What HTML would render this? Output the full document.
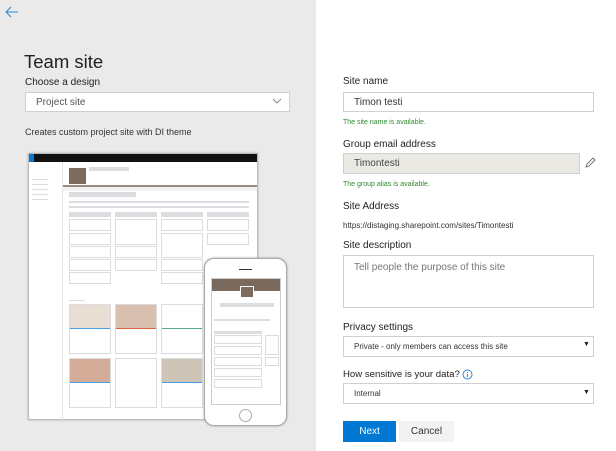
<!DOCTYPE html>
<html><head><meta charset="utf-8"><style>
*{box-sizing:border-box;margin:0;padding:0}
body{width:616px;height:451px;position:relative;overflow:hidden;background:#fff;font-family:"Liberation Sans",sans-serif;color:#222}
.a{position:absolute}
.left{left:0;top:0;width:316px;height:451px;background:#eaeaea}
.lbl{font-size:10px;color:#222}
.inp{border:1px solid #d0d0d0;background:#fff;font-size:10px;color:#555;padding-left:10px;display:flex;align-items:center}
.g{font-size:7px;color:#2e8b2e}
.bar{background:#dcdde0}
.box{border:1px solid #dcdcdc;background:#fff}
</style></head><body>
<div class="a left"></div>
<svg class="a" style="left:4px;top:5px" width="16" height="14"><path d="M14 7H2M7 2L2 7l5 5" stroke="#2b88d8" stroke-width="1" fill="none"/></svg>
<div class="a" style="left:24px;top:51px;font-size:18.5px;color:#222">Team site</div>
<div class="a lbl" style="left:25px;top:77px">Choose a design</div>
<div class="a inp" style="left:25px;top:92px;width:265px;height:20px">Project site</div>
<svg class="a" style="left:272px;top:98px" width="10" height="6"><path d="M1 1l4 4 4-4" stroke="#888" fill="none"/></svg>
<div class="a" style="left:25px;top:127px;font-size:9px;color:#333">Creates custom project site with DI theme</div>

<!-- desktop mock -->
<div class="a" style="left:28px;top:153px;width:230px;height:267px;background:#fff;border:1px solid #bbb;box-shadow:0 0 2px #aaa">
 <div class="a" style="left:0;top:0;width:228px;height:8px;background:#111"></div>
 <div class="a" style="left:0;top:0;width:5px;height:8px;background:#0078d4"></div>
 <div class="a" style="left:33px;top:8px;width:1px;height:258px;background:#e4e4e4"></div>
 <div class="a" style="left:34px;top:31px;width:194px;height:2px;background:#9b8a7d"></div>
 <div class="a" style="left:34px;top:33px;width:194px;height:4px;background:#f2f2f2"></div>
 <div class="a" style="left:40px;top:14px;width:17px;height:16px;background:#7d6b5e"></div>
 <div class="a bar" style="left:60px;top:13px;width:40px;height:4px"></div>
 <div class="a bar" style="left:3px;top:25px;width:16px;height:1px"></div>
 <div class="a bar" style="left:3px;top:30px;width:16px;height:1px"></div>
 <div class="a bar" style="left:3px;top:35px;width:16px;height:1px"></div>
 <div class="a bar" style="left:3px;top:40px;width:16px;height:1px"></div>
 <div class="a bar" style="left:3px;top:45px;width:16px;height:1px"></div>
 <div class="a bar" style="left:40px;top:38px;width:67px;height:5px"></div>
 <div class="a bar" style="left:40px;top:47px;width:180px;height:2px"></div>
 <div class="a bar" style="left:40px;top:52px;width:180px;height:2px"></div>
 <div class="a bar" style="left:40px;top:58px;width:42px;height:5px"></div>
 <div class="a bar" style="left:86px;top:58px;width:42px;height:5px"></div>
 <div class="a bar" style="left:132px;top:58px;width:42px;height:5px"></div>
 <div class="a bar" style="left:178px;top:58px;width:42px;height:5px"></div>
 <div class="a box" style="left:40px;top:65px;width:42px;height:12px"></div>
 <div class="a box" style="left:40px;top:79px;width:42px;height:12px"></div>
 <div class="a box" style="left:40px;top:92px;width:42px;height:12px"></div>
 <div class="a box" style="left:40px;top:105px;width:42px;height:12px"></div>
 <div class="a box" style="left:40px;top:118px;width:42px;height:12px"></div>
 <div class="a box" style="left:86px;top:65px;width:42px;height:26px"></div>
 <div class="a box" style="left:86px;top:92px;width:42px;height:12px"></div>
 <div class="a box" style="left:86px;top:105px;width:42px;height:12px"></div>
 <div class="a box" style="left:132px;top:65px;width:42px;height:12px"></div>
 <div class="a box" style="left:132px;top:79px;width:42px;height:25px"></div>
 <div class="a box" style="left:132px;top:105px;width:42px;height:12px"></div>
 <div class="a box" style="left:132px;top:118px;width:42px;height:12px"></div>
 <div class="a box" style="left:178px;top:65px;width:42px;height:12px"></div>
 <div class="a box" style="left:178px;top:79px;width:42px;height:12px"></div>
 <div class="a bar" style="left:40px;top:146px;width:16px;height:1px"></div>
 <div class="a box" style="left:40px;top:150px;width:42px;height:50px"><div style="height:24px;background:#e9ded4;border-bottom:1px solid #4aa0e8"></div></div>
 <div class="a box" style="left:86px;top:150px;width:42px;height:50px"><div style="height:24px;background:#d8bfb0;border-bottom:1px solid #e06040"></div></div>
 <div class="a box" style="left:132px;top:150px;width:42px;height:50px"><div style="height:24px;background:#fff;border-bottom:1px solid #5a9"></div></div>
 <div class="a box" style="left:40px;top:204px;width:42px;height:50px"><div style="height:24px;background:#d4ad98;border-bottom:1px solid #4aa0e8"></div></div>
 <div class="a box" style="left:86px;top:204px;width:42px;height:50px"></div>
 <div class="a box" style="left:132px;top:204px;width:42px;height:50px"><div style="height:24px;background:#cfc4b8;border-bottom:1px solid #4aa0e8"></div></div>
</div>
<!-- phone -->
<div class="a" style="left:204px;top:258px;width:83px;height:168px;background:#fff;border:1px solid #aaa;border-radius:10px;box-shadow:0 0 2px #999">
 <div class="a" style="left:34px;top:10px;width:13px;height:1px;background:#333"></div>
 <div class="a" style="left:6px;top:19px;width:70px;height:127px;border:1px solid #ccc;overflow:hidden">
  <div style="height:12px;background:#7a6a5e"></div>
  <div class="a" style="left:28px;top:7px;width:14px;height:12px;background:#7d6b5e;border:1px solid #fff"></div>
  <div class="a bar" style="left:8px;top:24px;width:54px;height:4px"></div>
  <div class="a bar" style="left:2px;top:40px;width:56px;height:2px"></div>
  <div class="a bar" style="left:2px;top:52px;width:48px;height:3px"></div>
  <div class="a box" style="left:2px;top:56px;width:48px;height:9px"></div>
  <div class="a box" style="left:2px;top:67px;width:48px;height:9px"></div>
  <div class="a box" style="left:2px;top:78px;width:48px;height:9px"></div>
  <div class="a box" style="left:2px;top:89px;width:48px;height:9px"></div>
  <div class="a box" style="left:2px;top:100px;width:48px;height:9px"></div>
  <div class="a box" style="left:53px;top:56px;width:14px;height:20px"></div>
  <div class="a box" style="left:53px;top:78px;width:14px;height:9px"></div>
 </div>
 <div class="a" style="left:34px;top:150px;width:13px;height:13px;border:1px solid #aaa;border-radius:50%"></div>
</div>

<!-- right -->
<div class="a lbl" style="left:343px;top:76px">Site name</div>
<div class="a inp" style="left:343px;top:92px;width:251px;height:20px;color:#333">Timon testi</div>
<div class="a g" style="left:343px;top:119px">The site name is available.</div>
<div class="a lbl" style="left:343px;top:139px">Group email address</div>
<div class="a inp" style="left:343px;top:153px;width:237px;height:21px;background:#eae9e4;color:#444">Timontesti</div>
<svg class="a" style="left:584px;top:157px" width="12" height="12"><path d="M2 10l1-3 6-6 2 2-6 6z" stroke="#666" fill="none" stroke-width=".9"/></svg>
<div class="a g" style="left:343px;top:181px">The group alias is available.</div>
<div class="a lbl" style="left:343px;top:201px">Site Address</div>
<div class="a" style="left:343px;top:221px;font-size:8px;color:#333">https://distaging.sharepoint.com/sites/Timontesti</div>
<div class="a lbl" style="left:343px;top:240px">Site description</div>
<div class="a" style="left:343px;top:255px;width:251px;height:53px;border:1px solid #d0d0d0;font-size:10px;color:#777;padding:6px 10px">Tell people the purpose of this site</div>
<div class="a lbl" style="left:343px;top:322px">Privacy settings</div>
<div class="a inp" style="left:343px;top:336px;width:251px;height:21px;font-size:8px;color:#333">Private - only members can access this site</div>
<div class="a" style="left:583px;top:341px;font-size:7px">▼</div>
<div class="a lbl" style="left:343px;top:369px;font-size:9.6px">How sensitive is your data?</div>
<svg class="a" style="left:462px;top:369px" width="11" height="11"><circle cx="5.5" cy="5.5" r="4.5" stroke="#2b88d8" fill="none"/><path d="M5.5 5v3M5.5 3v1" stroke="#2b88d8"/></svg>
<div class="a inp" style="left:343px;top:383px;width:251px;height:21px;font-size:8px;color:#333">Internal</div>
<div class="a" style="left:583px;top:389px;font-size:7px">▼</div>
<div class="a" style="left:343px;top:421px;width:53px;height:21px;background:#0078d4;color:#fff;font-size:10px;display:flex;align-items:center;justify-content:center">Next</div>
<div class="a" style="left:399px;top:421px;width:55px;height:21px;background:#f3f3f3;color:#333;font-size:10px;display:flex;align-items:center;justify-content:center">Cancel</div>
</body></html>
